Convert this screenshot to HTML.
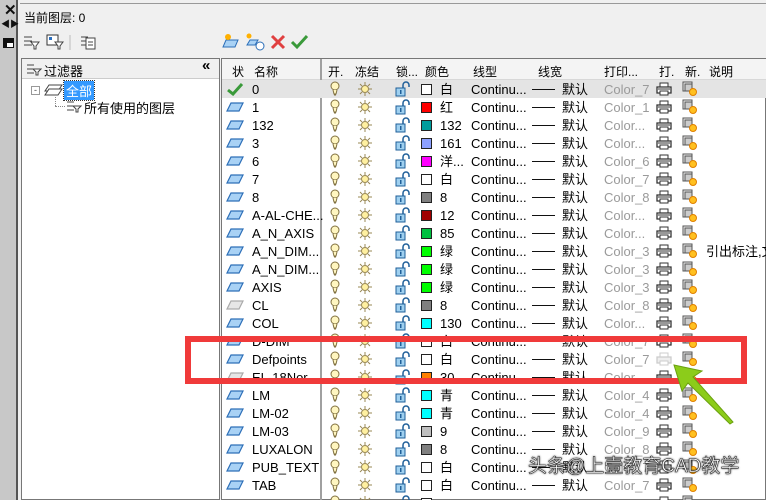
<!DOCTYPE html>
<html style="width:766px;height:500px;overflow:hidden"><head><meta charset="utf-8"><style>
*{margin:0;padding:0;box-sizing:border-box}
html,body{overflow:hidden}
body{width:766px;height:500px;background:#f0f0f0;position:relative;font-family:"Liberation Sans","Noto Sans CJK SC",sans-serif;font-size:13px;color:#000}
.a{position:absolute}
.strip{left:0;top:0;width:18px;height:500px;background:#c8c8c8;border-right:2px solid #555}
.row{position:absolute;left:222px;width:544px;height:18px;overflow:hidden}
.row span{position:absolute;top:2px;white-space:nowrap;line-height:15px}
.sw{position:absolute;top:4px;left:199px;width:11px;height:11px;border:1px solid #222}
.ln{position:absolute;left:310px;top:9px;width:23px;height:1px;background:#111}
.g{color:#9a9a9a}
.hd span{position:absolute;top:4px;font-size:12px}
.b{position:absolute;left:108px;top:1px}
.s{position:absolute;left:135px;top:1px}
.l{position:absolute;left:173px;top:1px}
.p{position:absolute;left:434px;top:2px}
.n{position:absolute;left:460px;top:1px}
.y{position:absolute;left:4px;top:4px}
</style></head><body>
<svg width="0" height="0" style="position:absolute">
<defs>
<symbol id="ly" viewBox="0 0 18 10"><path d="M5 1 H17 L13 9 H1 Z" fill="#a9d2f5" stroke="#2d6fb8" stroke-width="1.2"/></symbol>
<symbol id="lyg" viewBox="0 0 18 10"><path d="M5 1 H17 L13 9 H1 Z" fill="#e6e6e6" stroke="#aaa" stroke-width="1.2"/></symbol>
<symbol id="bulb" viewBox="0 0 10 16"><circle cx="5" cy="5" r="4" fill="#fff6c0" stroke="#807040"/><path d="M3 9 L4 13 H6 L7 9" fill="#fff6c0" stroke="#807040"/><path d="M4 14 H6" stroke="#807040"/></symbol>
<symbol id="sun" viewBox="0 0 16 16"><circle cx="8" cy="8" r="3.5" fill="#fff0a0" stroke="#998855"/><path d="M8 1V4M8 12V15M1 8H4M12 8H15M3 3L5 5M11 11L13 13M13 3L11 5M5 11L3 13" stroke="#998855" stroke-width="1"/></symbol>
<symbol id="lock" viewBox="0 0 16 16"><rect x="1" y="7" width="9" height="8" fill="#9fd0f0" stroke="#1f5f99"/><path d="M8 7V4A3 3 0 0 1 14 4V6" fill="none" stroke="#1f5f99" stroke-width="1.5"/><rect x="5" y="9" width="1.5" height="4" fill="#1f5f99"/></symbol>
<symbol id="pr" viewBox="0 0 16 14"><path d="M4 1H12V5H4Z" fill="#fff" stroke="#333"/><path d="M1 5H15V11H1Z" fill="#fff" stroke="#333" stroke-width="1.3"/><path d="M4 9H12V13H4Z" fill="#fff" stroke="#333"/><path d="M2 7H14" stroke="#333"/></symbol>
<symbol id="prg" viewBox="0 0 16 14"><path d="M4 1H12V5H4Z" fill="#fff" stroke="#ccc"/><path d="M1 5H15V11H1Z" fill="#eee" stroke="#ccc" stroke-width="1.3"/><path d="M4 9H12V13H4Z" fill="#fff" stroke="#ccc"/></symbol>
<symbol id="nw" viewBox="0 0 16 16"><rect x="1" y="1" width="9" height="9" fill="#eee" stroke="#555"/><rect x="3" y="3" width="7" height="7" fill="#ccc" stroke="#555"/><circle cx="11" cy="11" r="3.5" fill="#ffc020" stroke="#e08000"/></symbol>
</defs></svg>

<div class="a strip"></div>
<div class="a" style="left:4px;top:1px;font-weight:bold;font-size:15px;color:#111">✕</div>
<div class="a" style="left:1px;top:17px;font-size:9px;color:#111">◀▶</div>
<div class="a" style="left:3px;top:38px;width:11px;height:10px;background:#111;border-top:3px solid #111"><div style="margin:2px 0 0 4px;width:6px;height:4px;background:#fff"></div></div>
<div class="a" style="left:20px;top:3px;width:746px;height:1px;background:#999"></div>
<div class="a" style="left:24px;top:9px;font-size:12px">当前图层: 0</div>
<svg class="a" style="left:22px;top:33px" width="80" height="18"><g stroke="#444" fill="none"><path d="M2 4H10M2 8H10M2 12H10"/><path d="M9 9H17L14 13V16H12V13Z" fill="#fff"/></g>
<g transform="translate(24,0)"><rect x="1" y="2" width="11" height="10" fill="#fff" stroke="#333"/><rect x="3" y="4" width="3" height="3" fill="#2a6fc0"/><path d="M9 9H17L14 13V16H12V13Z" fill="#fff" stroke="#444"/></g>
<path d="M48 2V17" stroke="#bbb"/>
<g transform="translate(57,0)" stroke="#444" fill="none"><path d="M2 4H9M2 8H9M2 12H9"/><rect x="7" y="5" width="9" height="11" fill="#fff"/><path d="M9 9H14M9 12H14"/></g></svg>
<svg class="a" style="left:222px;top:32px" width="90" height="20">
<path d="M4 8H16L13 15H1Z" fill="#a9d2f5" stroke="#2d6fb8"/><circle cx="6" cy="5" r="3" fill="#ffb000"/>
<path d="M28 8H36L33 13H25Z" fill="#a9d2f5" stroke="#2d6fb8"/><circle cx="27" cy="4" r="2.5" fill="#ffb000"/><circle cx="38" cy="14" r="4" fill="#fff" stroke="#2d6fb8"/>
<path d="M50 4L62 16M62 4L50 16" stroke="#e04040" stroke-width="3"/>
<path d="M70 10L75 15L85 4" stroke="#3a9a3a" stroke-width="3" fill="none"/></svg>

<div class="a" style="left:21px;top:58px;width:199px;height:442px;background:#fff;border:1px solid #777"></div>
<div class="a" style="left:22px;top:59px;width:197px;height:20px;background:#f0f0f0;border-bottom:1px solid #ccc"></div>
<svg class="a" style="left:26px;top:62px" width="16" height="14"><g stroke="#444" fill="none"><path d="M1 3H8M1 7H8M1 11H8"/><path d="M7 7H15L12 10V13H10V10Z" fill="#fff"/></g></svg>
<div class="a" style="left:44px;top:61px">过滤器</div>
<div class="a" style="left:202px;top:57px;font-weight:bold;font-size:15px">«</div>
<div class="a" style="left:31px;top:86px;width:9px;height:9px;border:1px solid #999;font-size:9px;line-height:6px;text-align:center;color:#444">-</div>
<svg class="a" style="left:44px;top:83px" width="20" height="14"><path d="M5 2H18L14 8H1Z" fill="#fff" stroke="#444"/><path d="M5 6H18L14 12H1Z" fill="#fff" stroke="#444"/></svg>
<div class="a" style="left:64px;top:81px;background:#3399ff;color:#fff;padding:0 2px;outline:1px dotted #333">全部</div>
<div class="a" style="left:55px;top:97px;width:1px;height:9px;border-left:1px dotted #888"></div>
<div class="a" style="left:55px;top:106px;width:10px;height:1px;border-top:1px dotted #888"></div>
<svg class="a" style="left:66px;top:99px" width="16" height="14"><g stroke="#444" fill="none"><path d="M1 3H8M1 7H8M1 11H8"/><path d="M7 7H15L12 10V13H10V10Z" fill="#fff"/></g></svg>
<div class="a" style="left:84px;top:98px">所有使用的图层</div>

<div class="a" style="left:221px;top:58px;width:545px;height:442px;background:#fff;border:1px solid #777"></div>
<div class="a hd" style="left:222px;top:59px;width:544px;height:21px;background:#f4f4f4;border-bottom:1px solid #d8d8d8">
<span style="left:10px">状</span><span style="left:32px">名称</span><span style="left:106px">开.</span><span style="left:133px">冻结</span><span style="left:174px">锁...</span><span style="left:203px">颜色</span><span style="left:251px">线型</span><span style="left:316px">线宽</span><span style="left:382px">打印...</span><span style="left:437px">打.</span><span style="left:463px">新.</span><span style="left:487px">说明</span>
</div>
<div class="a" style="left:320px;top:59px;width:2px;height:441px;background:#a0a0a0"></div>

<div class="row" style="top:80px;background:#e4e4e4"><svg class="a" style="left:4px;top:2px" width="18" height="14"><path d="M2 8L7 12L16 2" stroke="#3a9a3a" stroke-width="3" fill="none"/></svg><span style="left:30px">0</span><svg class="b" width="10" height="16"><use href="#bulb"/></svg><svg class="s" width="16" height="16"><use href="#sun"/></svg><svg class="l" width="16" height="16"><use href="#lock"/></svg><div class="sw" style="background:#fff"></div><span style="left:218px">白</span><span style="left:249px">Continu...</span><i class="ln"></i><span style="left:340px">默认</span><span class="g" style="left:382px">Color_7</span><svg class="p" width="16" height="14"><use href="#pr"/></svg><svg class="n" width="16" height="16"><use href="#nw"/></svg></div>
<div class="row" style="top:98px"><svg class="y" width="18" height="10"><use href="#ly"/></svg><span style="left:30px">1</span><svg class="b" width="10" height="16"><use href="#bulb"/></svg><svg class="s" width="16" height="16"><use href="#sun"/></svg><svg class="l" width="16" height="16"><use href="#lock"/></svg><div class="sw" style="background:#f00"></div><span style="left:218px">红</span><span style="left:249px">Continu...</span><i class="ln"></i><span style="left:340px">默认</span><span class="g" style="left:382px">Color_1</span><svg class="p" width="16" height="14"><use href="#pr"/></svg><svg class="n" width="16" height="16"><use href="#nw"/></svg></div>
<div class="row" style="top:116px"><svg class="y" width="18" height="10"><use href="#ly"/></svg><span style="left:30px">132</span><svg class="b" width="10" height="16"><use href="#bulb"/></svg><svg class="s" width="16" height="16"><use href="#sun"/></svg><svg class="l" width="16" height="16"><use href="#lock"/></svg><div class="sw" style="background:#009c9c"></div><span style="left:218px">132</span><span style="left:249px">Continu...</span><i class="ln"></i><span style="left:340px">默认</span><span class="g" style="left:382px">Color...</span><svg class="p" width="16" height="14"><use href="#pr"/></svg><svg class="n" width="16" height="16"><use href="#nw"/></svg></div>
<div class="row" style="top:134px"><svg class="y" width="18" height="10"><use href="#ly"/></svg><span style="left:30px">3</span><svg class="b" width="10" height="16"><use href="#bulb"/></svg><svg class="s" width="16" height="16"><use href="#sun"/></svg><svg class="l" width="16" height="16"><use href="#lock"/></svg><div class="sw" style="background:#8ca0ff"></div><span style="left:218px">161</span><span style="left:249px">Continu...</span><i class="ln"></i><span style="left:340px">默认</span><span class="g" style="left:382px">Color...</span><svg class="p" width="16" height="14"><use href="#pr"/></svg><svg class="n" width="16" height="16"><use href="#nw"/></svg></div>
<div class="row" style="top:152px"><svg class="y" width="18" height="10"><use href="#ly"/></svg><span style="left:30px">6</span><svg class="b" width="10" height="16"><use href="#bulb"/></svg><svg class="s" width="16" height="16"><use href="#sun"/></svg><svg class="l" width="16" height="16"><use href="#lock"/></svg><div class="sw" style="background:#f0f"></div><span style="left:218px">洋...</span><span style="left:249px">Continu...</span><i class="ln"></i><span style="left:340px">默认</span><span class="g" style="left:382px">Color_6</span><svg class="p" width="16" height="14"><use href="#pr"/></svg><svg class="n" width="16" height="16"><use href="#nw"/></svg></div>
<div class="row" style="top:170px"><svg class="y" width="18" height="10"><use href="#ly"/></svg><span style="left:30px">7</span><svg class="b" width="10" height="16"><use href="#bulb"/></svg><svg class="s" width="16" height="16"><use href="#sun"/></svg><svg class="l" width="16" height="16"><use href="#lock"/></svg><div class="sw" style="background:#fff"></div><span style="left:218px">白</span><span style="left:249px">Continu...</span><i class="ln"></i><span style="left:340px">默认</span><span class="g" style="left:382px">Color_7</span><svg class="p" width="16" height="14"><use href="#pr"/></svg><svg class="n" width="16" height="16"><use href="#nw"/></svg></div>
<div class="row" style="top:188px"><svg class="y" width="18" height="10"><use href="#ly"/></svg><span style="left:30px">8</span><svg class="b" width="10" height="16"><use href="#bulb"/></svg><svg class="s" width="16" height="16"><use href="#sun"/></svg><svg class="l" width="16" height="16"><use href="#lock"/></svg><div class="sw" style="background:#808080"></div><span style="left:218px">8</span><span style="left:249px">Continu...</span><i class="ln"></i><span style="left:340px">默认</span><span class="g" style="left:382px">Color_8</span><svg class="p" width="16" height="14"><use href="#pr"/></svg><svg class="n" width="16" height="16"><use href="#nw"/></svg></div>
<div class="row" style="top:206px"><svg class="y" width="18" height="10"><use href="#ly"/></svg><span style="left:30px">A-AL-CHE...</span><svg class="b" width="10" height="16"><use href="#bulb"/></svg><svg class="s" width="16" height="16"><use href="#sun"/></svg><svg class="l" width="16" height="16"><use href="#lock"/></svg><div class="sw" style="background:#a00000"></div><span style="left:218px">12</span><span style="left:249px">Continu...</span><i class="ln"></i><span style="left:340px">默认</span><span class="g" style="left:382px">Color...</span><svg class="p" width="16" height="14"><use href="#pr"/></svg><svg class="n" width="16" height="16"><use href="#nw"/></svg></div>
<div class="row" style="top:224px"><svg class="y" width="18" height="10"><use href="#ly"/></svg><span style="left:30px">A_N_AXIS</span><svg class="b" width="10" height="16"><use href="#bulb"/></svg><svg class="s" width="16" height="16"><use href="#sun"/></svg><svg class="l" width="16" height="16"><use href="#lock"/></svg><div class="sw" style="background:#00c040"></div><span style="left:218px">85</span><span style="left:249px">Continu...</span><i class="ln"></i><span style="left:340px">默认</span><span class="g" style="left:382px">Color...</span><svg class="p" width="16" height="14"><use href="#pr"/></svg><svg class="n" width="16" height="16"><use href="#nw"/></svg></div>
<div class="row" style="top:242px"><svg class="y" width="18" height="10"><use href="#ly"/></svg><span style="left:30px">A_N_DIM...</span><svg class="b" width="10" height="16"><use href="#bulb"/></svg><svg class="s" width="16" height="16"><use href="#sun"/></svg><svg class="l" width="16" height="16"><use href="#lock"/></svg><div class="sw" style="background:#0f0"></div><span style="left:218px">绿</span><span style="left:249px">Continu...</span><i class="ln"></i><span style="left:340px">默认</span><span class="g" style="left:382px">Color_3</span><svg class="p" width="16" height="14"><use href="#pr"/></svg><svg class="n" width="16" height="16"><use href="#nw"/></svg><span style="left:484px">引出标注,文</span></div>
<div class="row" style="top:260px"><svg class="y" width="18" height="10"><use href="#ly"/></svg><span style="left:30px">A_N_DIM...</span><svg class="b" width="10" height="16"><use href="#bulb"/></svg><svg class="s" width="16" height="16"><use href="#sun"/></svg><svg class="l" width="16" height="16"><use href="#lock"/></svg><div class="sw" style="background:#0f0"></div><span style="left:218px">绿</span><span style="left:249px">Continu...</span><i class="ln"></i><span style="left:340px">默认</span><span class="g" style="left:382px">Color_3</span><svg class="p" width="16" height="14"><use href="#pr"/></svg><svg class="n" width="16" height="16"><use href="#nw"/></svg></div>
<div class="row" style="top:278px"><svg class="y" width="18" height="10"><use href="#ly"/></svg><span style="left:30px">AXIS</span><svg class="b" width="10" height="16"><use href="#bulb"/></svg><svg class="s" width="16" height="16"><use href="#sun"/></svg><svg class="l" width="16" height="16"><use href="#lock"/></svg><div class="sw" style="background:#0f0"></div><span style="left:218px">绿</span><span style="left:249px">Continu...</span><i class="ln"></i><span style="left:340px">默认</span><span class="g" style="left:382px">Color_3</span><svg class="p" width="16" height="14"><use href="#pr"/></svg><svg class="n" width="16" height="16"><use href="#nw"/></svg></div>
<div class="row" style="top:296px"><svg class="y" width="18" height="10"><use href="#lyg"/></svg><span style="left:30px">CL</span><svg class="b" width="10" height="16"><use href="#bulb"/></svg><svg class="s" width="16" height="16"><use href="#sun"/></svg><svg class="l" width="16" height="16"><use href="#lock"/></svg><div class="sw" style="background:#808080"></div><span style="left:218px">8</span><span style="left:249px">Continu...</span><i class="ln"></i><span style="left:340px">默认</span><span class="g" style="left:382px">Color_8</span><svg class="p" width="16" height="14"><use href="#pr"/></svg><svg class="n" width="16" height="16"><use href="#nw"/></svg></div>
<div class="row" style="top:314px"><svg class="y" width="18" height="10"><use href="#ly"/></svg><span style="left:30px">COL</span><svg class="b" width="10" height="16"><use href="#bulb"/></svg><svg class="s" width="16" height="16"><use href="#sun"/></svg><svg class="l" width="16" height="16"><use href="#lock"/></svg><div class="sw" style="background:#0ff"></div><span style="left:218px">130</span><span style="left:249px">Continu...</span><i class="ln"></i><span style="left:340px">默认</span><span class="g" style="left:382px">Color...</span><svg class="p" width="16" height="14"><use href="#pr"/></svg><svg class="n" width="16" height="16"><use href="#nw"/></svg></div>
<div class="row" style="top:332px"><svg class="y" width="18" height="10"><use href="#ly"/></svg><span style="left:30px">D-DIM</span><svg class="b" width="10" height="16"><use href="#bulb"/></svg><svg class="s" width="16" height="16"><use href="#sun"/></svg><svg class="l" width="16" height="16"><use href="#lock"/></svg><div class="sw" style="background:#fff"></div><span style="left:218px">白</span><span style="left:249px">Continu...</span><i class="ln"></i><span style="left:340px">默认</span><span class="g" style="left:382px">Color_7</span><svg class="p" width="16" height="14"><use href="#pr"/></svg><svg class="n" width="16" height="16"><use href="#nw"/></svg></div>
<div class="row" style="top:350px"><svg class="y" width="18" height="10"><use href="#ly"/></svg><span style="left:30px">Defpoints</span><svg class="b" width="10" height="16"><use href="#bulb"/></svg><svg class="s" width="16" height="16"><use href="#sun"/></svg><svg class="l" width="16" height="16"><use href="#lock"/></svg><div class="sw" style="background:#fff"></div><span style="left:218px">白</span><span style="left:249px">Continu...</span><i class="ln"></i><span style="left:340px">默认</span><span class="g" style="left:382px">Color_7</span><svg class="p" width="16" height="14"><use href="#prg"/></svg><svg class="n" width="16" height="16"><use href="#nw"/></svg></div>
<div class="row" style="top:368px"><svg class="y" width="18" height="10"><use href="#lyg"/></svg><span style="left:30px">EL-18Nor...</span><svg class="b" width="10" height="16"><use href="#bulb"/></svg><svg class="s" width="16" height="16"><use href="#sun"/></svg><svg class="l" width="16" height="16"><use href="#lock"/></svg><div class="sw" style="background:#ff7f00"></div><span style="left:218px">30</span><span style="left:249px">Continu...</span><i class="ln"></i><span style="left:340px">默认</span><span class="g" style="left:382px">Color...</span><svg class="p" width="16" height="14"><use href="#pr"/></svg><svg class="n" width="16" height="16"><use href="#nw"/></svg></div>
<div class="row" style="top:386px"><svg class="y" width="18" height="10"><use href="#ly"/></svg><span style="left:30px">LM</span><svg class="b" width="10" height="16"><use href="#bulb"/></svg><svg class="s" width="16" height="16"><use href="#sun"/></svg><svg class="l" width="16" height="16"><use href="#lock"/></svg><div class="sw" style="background:#0ff"></div><span style="left:218px">青</span><span style="left:249px">Continu...</span><i class="ln"></i><span style="left:340px">默认</span><span class="g" style="left:382px">Color_4</span><svg class="p" width="16" height="14"><use href="#pr"/></svg><svg class="n" width="16" height="16"><use href="#nw"/></svg></div>
<div class="row" style="top:404px"><svg class="y" width="18" height="10"><use href="#ly"/></svg><span style="left:30px">LM-02</span><svg class="b" width="10" height="16"><use href="#bulb"/></svg><svg class="s" width="16" height="16"><use href="#sun"/></svg><svg class="l" width="16" height="16"><use href="#lock"/></svg><div class="sw" style="background:#0ff"></div><span style="left:218px">青</span><span style="left:249px">Continu...</span><i class="ln"></i><span style="left:340px">默认</span><span class="g" style="left:382px">Color_4</span><svg class="p" width="16" height="14"><use href="#pr"/></svg><svg class="n" width="16" height="16"><use href="#nw"/></svg></div>
<div class="row" style="top:422px"><svg class="y" width="18" height="10"><use href="#ly"/></svg><span style="left:30px">LM-03</span><svg class="b" width="10" height="16"><use href="#bulb"/></svg><svg class="s" width="16" height="16"><use href="#sun"/></svg><svg class="l" width="16" height="16"><use href="#lock"/></svg><div class="sw" style="background:#c0c0c0"></div><span style="left:218px">9</span><span style="left:249px">Continu...</span><i class="ln"></i><span style="left:340px">默认</span><span class="g" style="left:382px">Color_9</span><svg class="p" width="16" height="14"><use href="#pr"/></svg><svg class="n" width="16" height="16"><use href="#nw"/></svg></div>
<div class="row" style="top:440px"><svg class="y" width="18" height="10"><use href="#ly"/></svg><span style="left:30px">LUXALON</span><svg class="b" width="10" height="16"><use href="#bulb"/></svg><svg class="s" width="16" height="16"><use href="#sun"/></svg><svg class="l" width="16" height="16"><use href="#lock"/></svg><div class="sw" style="background:#808080"></div><span style="left:218px">8</span><span style="left:249px">Continu...</span><i class="ln"></i><span style="left:340px">默认</span><span class="g" style="left:382px">Color_8</span><svg class="p" width="16" height="14"><use href="#pr"/></svg><svg class="n" width="16" height="16"><use href="#nw"/></svg></div>
<div class="row" style="top:458px"><svg class="y" width="18" height="10"><use href="#ly"/></svg><span style="left:30px">PUB_TEXT</span><svg class="b" width="10" height="16"><use href="#bulb"/></svg><svg class="s" width="16" height="16"><use href="#sun"/></svg><svg class="l" width="16" height="16"><use href="#lock"/></svg><div class="sw" style="background:#fff"></div><span style="left:218px">白</span><span style="left:249px">Continu...</span><i class="ln"></i><span style="left:340px">默认</span><span class="g" style="left:382px">Color_7</span><svg class="p" width="16" height="14"><use href="#pr"/></svg><svg class="n" width="16" height="16"><use href="#nw"/></svg></div>
<div class="row" style="top:476px"><svg class="y" width="18" height="10"><use href="#ly"/></svg><span style="left:30px">TAB</span><svg class="b" width="10" height="16"><use href="#bulb"/></svg><svg class="s" width="16" height="16"><use href="#sun"/></svg><svg class="l" width="16" height="16"><use href="#lock"/></svg><div class="sw" style="background:#fff"></div><span style="left:218px">白</span><span style="left:249px">Continu...</span><i class="ln"></i><span style="left:340px">默认</span><span class="g" style="left:382px">Color_7</span><svg class="p" width="16" height="14"><use href="#pr"/></svg><svg class="n" width="16" height="16"><use href="#nw"/></svg></div>
<div class="row" style="top:494px;height:6px"><svg class="b" width="10" height="16"><use href="#bulb"/></svg><svg class="s" width="16" height="16"><use href="#sun"/></svg><svg class="l" width="16" height="16"><use href="#lock"/></svg><div class="sw" style="background:#fff"></div><svg class="p" width="16" height="14"><use href="#pr"/></svg><svg class="n" width="16" height="16"><use href="#nw"/></svg></div>

<div class="a" style="left:185px;top:336px;width:562px;height:48px;border:6px solid #f03a3a"></div>
<svg class="a" style="left:660px;top:355px" width="90" height="75"><path d="M14 10 L42 16 L33 22 L73 67 L70 69 L28 28 L22 36 Z" fill="#8ccc1a" stroke="#6aa010" stroke-width="1"/></svg>
<div class="a" style="left:528px;top:451px;font-size:19px;color:#fff;-webkit-text-stroke:0.6px #333;text-shadow:0 0 2px #000;white-space:nowrap">头条@上壹教育CAD教学</div>
</body></html>
